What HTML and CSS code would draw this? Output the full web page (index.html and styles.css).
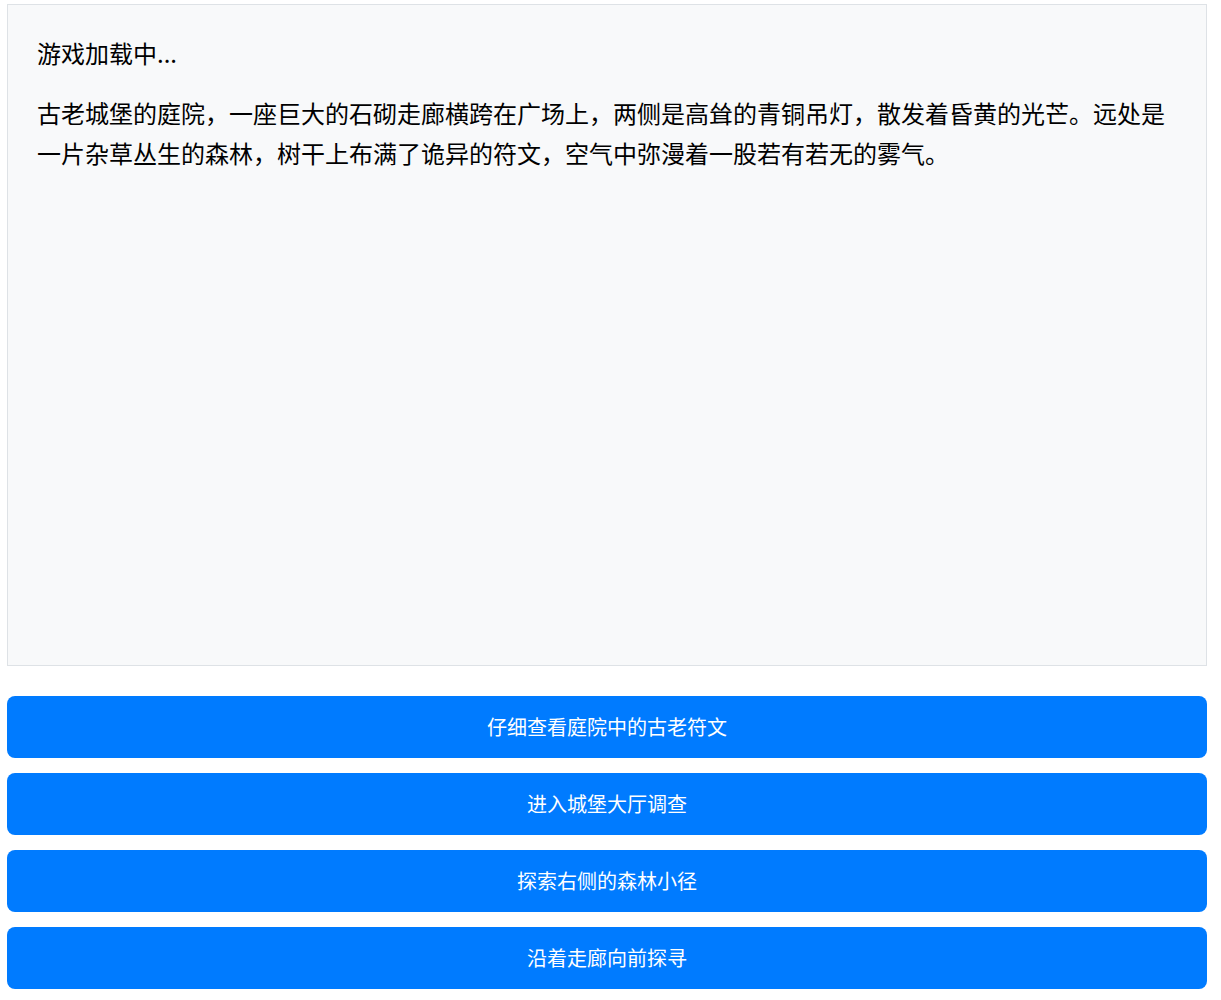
FILE: index.html
```html
<!DOCTYPE html>
<html lang="zh-CN">
<head>
<meta charset="utf-8">
<title>游戏</title>
<link rel="stylesheet" href="styles.css">
</head>
<body>
<div class="game">
  <div class="scene">
    <div class="status">游戏加载中...</div>
    <p class="desc">古老城堡的庭院，一座巨大的石砌走廊横跨在广场上，两侧是高耸的青铜吊灯，散发着昏黄的光芒。远处是一片杂草丛生的森林，树干上布满了诡异的符文，空气中弥漫着一股若有若无的雾气。</p>
  </div>
  <div class="choices">
    <button class="choice">仔细查看庭院中的古老符文</button>
    <button class="choice">进入城堡大厅调查</button>
    <button class="choice">探索右侧的森林小径</button>
    <button class="choice">沿着走廊向前探寻</button>
  </div>
</div>
</body>
</html>
```
FILE: styles.css
```css
html, body {
  margin: 0;
  padding: 0;
  background: #ffffff;
}
body {
  font-family: "Noto Sans CJK SC", "Noto Sans", "Liberation Sans", sans-serif;
  color: #000000;
}
.game {
  width: 1200px;
  padding: 4px 0 0 7px;
}
.scene {
  box-sizing: border-box;
  height: 662px;
  background: #f8f9fa;
  border: 1px solid #dee2e6;
  padding: 28px 29px 29px;
  font-size: 24px;
  line-height: 40px;
}
.status {
  margin: 0;
}
.desc {
  margin: 20px 0 0;
}
.choices {
  display: flex;
  flex-direction: column;
  gap: 15px;
  margin-top: 30px;
}
.choice {
  display: block;
  width: 100%;
  height: 62px;
  border: none;
  border-radius: 8px;
  background: #007bff;
  color: #ffffff;
  font-family: "Noto Sans CJK SC", "Noto Sans", "Liberation Sans", sans-serif;
  font-size: 20px;
  line-height: 24px;
  padding: 0;
  cursor: pointer;
}
```
